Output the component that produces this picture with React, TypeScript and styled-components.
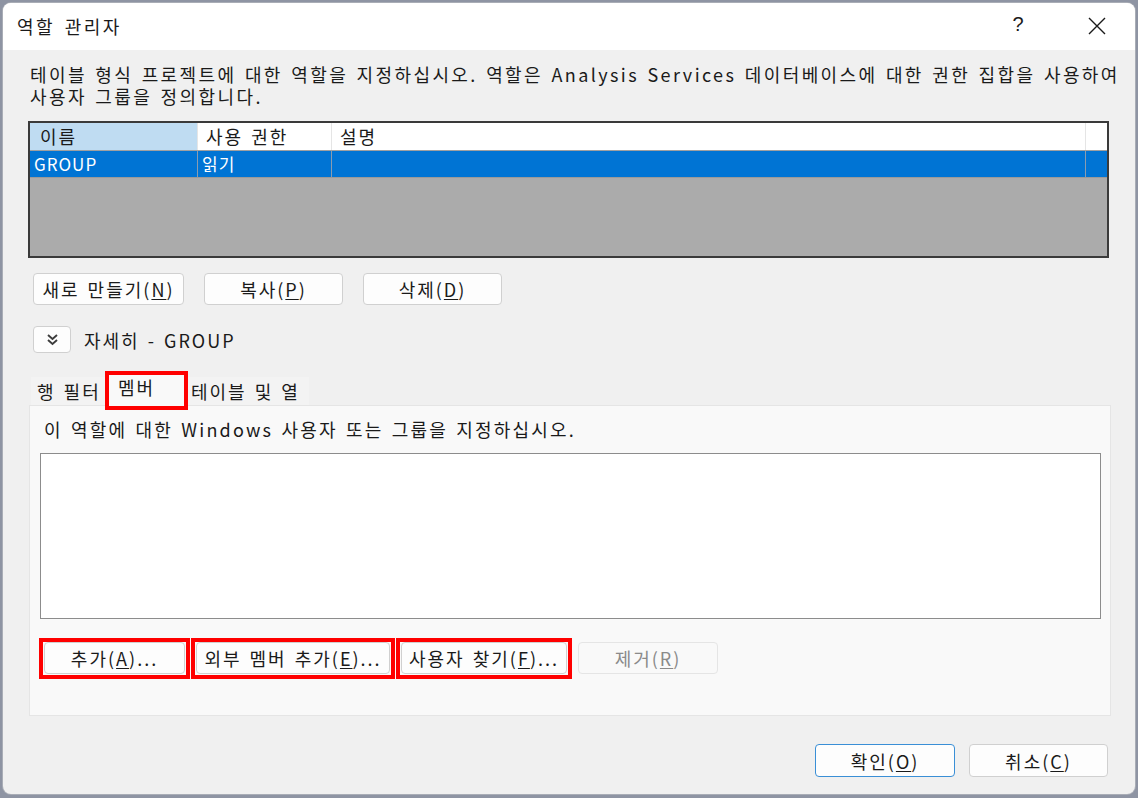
import { ReactElement } from 'react';
import styled, { createGlobalStyle, css } from 'styled-components';

const GlobalStyle = createGlobalStyle`
html, body {
    margin: 0;
    padding: 0;
    background-color: #8e94a3;
}
body {
    font-family: "Noto Sans CJK KR", "Noto Sans", sans-serif;
    color: #1a1a1a;
}
`;

interface IColumn {
    title: string;
    width: number;
}

const columns: IColumn[] = [
    { title: '이름', width: 168 },
    { title: '사용 권한', width: 134 },
    { title: '설명', width: 754 },
];

const roles = [{ name: 'GROUP', permission: '읽기', description: '' }];

const Label = (props: { text: string; keyChar: string; suffix?: string }): ReactElement => (
    <>
        {props.text}(<u>{props.keyChar}</u>){props.suffix}
    </>
);

const CloseIcon = () => (
    <svg width="18" height="18" viewBox="0 0 18 18">
        <path d="M1 1 L17 17 M17 1 L1 17" stroke="#1a1a1a" strokeWidth="1.4" fill="none" />
    </svg>
);

const ExpandIcon = () => (
    <svg width="13" height="13" viewBox="0 0 13 13">
        <path d="M2 2 L6.5 6 L11 2 M2 7 L6.5 11 L11 7" stroke="#3c3c3c" strokeWidth="1.9" fill="none" />
    </svg>
);

const RolesGrid = (): ReactElement => (
    <Grid>
        <GridHeader>
            {columns.map((col, i) => (
                <HeaderCell key={col.title} $w={col.width} $active={i === 0}>{col.title}</HeaderCell>
            ))}
            <HeaderFiller />
        </GridHeader>
        {roles.map(role => (
            <GridRow key={role.name}>
                <RowCell $w={columns[0].width}>{role.name}</RowCell>
                <RowCell $w={columns[1].width}>{role.permission}</RowCell>
                <RowCell $w={columns[2].width}>{role.description}</RowCell>
                <RowFiller />
            </GridRow>
        ))}
    </Grid>
);

export default function App(): ReactElement {
    return (
        <>
            <GlobalStyle />
            <Window>
                <TitleBar>
                    <Title>역할 관리자</Title>
                    <TitleButtons>
                        <HelpButton>?</HelpButton>
                        <CloseButton><CloseIcon /></CloseButton>
                    </TitleButtons>
                </TitleBar>
                <Body>
                    <Description>
                        <div>테이블 형식 프로젝트에 대한 역할을 지정하십시오. 역할은 Analysis Services 데이터베이스에 대한 권한 집합을 사용하여</div>
                        <div>사용자 그룹을 정의합니다.</div>
                    </Description>
                    <RolesGrid />
                    <ButtonRow>
                        <Button $w={151}><Label text="새로 만들기" keyChar="N" /></Button>
                        <Button $w={139}><Label text="복사" keyChar="P" /></Button>
                        <Button $w={139}><Label text="삭제" keyChar="D" /></Button>
                    </ButtonRow>
                    <DetailsRow>
                        <ExpandButton><ExpandIcon /></ExpandButton>
                        <span>자세히 - GROUP</span>
                    </DetailsRow>
                    <TabStrip>
                        <Tab $w={77}>행 필터</Tab>
                        <Tab $w={77} $selected $marked>멤버</Tab>
                        <Tab $w={124}>테이블 및 열</Tab>
                    </TabStrip>
                    <TabPanel>
                        <PanelText>이 역할에 대한 Windows 사용자 또는 그룹을 지정하십시오.</PanelText>
                        <MemberList />
                        <PanelButtons>
                            <Button $w={141} $marked><Label text="추가" keyChar="A" suffix="..." /></Button>
                            <Button $w={194} $marked><Label text="외부 멤버 추가" keyChar="E" suffix="..." /></Button>
                            <Button $w={166} $marked><Label text="사용자 찾기" keyChar="F" suffix="..." /></Button>
                            <Button $w={140} disabled><Label text="제거" keyChar="R" /></Button>
                        </PanelButtons>
                    </TabPanel>
                    <Footer>
                        <Button $w={140} $h={33} $primary><Label text="확인" keyChar="O" /></Button>
                        <Button $w={139} $h={33}><Label text="취소" keyChar="C" /></Button>
                    </Footer>
                </Body>
            </Window>
        </>
    );
}

const Window = styled.div`
margin: 3px 3px 4px 3px;
width: 1132px;
height: 791px;
box-sizing: border-box;
border-radius: 8px;
overflow: hidden;
background-color: #f0f0f0;
box-shadow: 0 0 0 1px #a9adb6;
display: flex;
flex-direction: column;
`;

const TitleBar = styled.div`
height: 47px;
flex-shrink: 0;
background-color: #ffffff;
display: flex;
align-items: center;
justify-content: space-between;
padding-left: 14px;
`;

const Title = styled.div`
font-size: 18px;
letter-spacing: 2.5px;
word-spacing: 3px;
color: #1a1a1a;
margin-top: -2px;
`;

const TitleButtons = styled.div`
display: flex;
align-items: center;
height: 100%;
`;

const HelpButton = styled.div`
width: 70px;
text-align: center;
font-size: 20px;
font-family: "Liberation Sans", sans-serif;
color: #1a1a1a;
margin-right: 9px;
margin-top: -4px;
`;

const CloseButton = styled.div`
width: 70px;
display: flex;
justify-content: center;
margin-right: 3px;
margin-top: -2px;
`;

const Body = styled.div`
flex: 1;
display: flex;
flex-direction: column;
padding: 13px 26px 0 25px;
font-size: 18px;
letter-spacing: 2px;
word-spacing: 2px;
`;

const Description = styled.div`
padding-left: 2px;
line-height: 22px;
letter-spacing: 2.4px;
white-space: nowrap;
`;

const Grid = styled.div`
margin-top: 14px;
height: 137px;
box-sizing: border-box;
border: 2px solid #3a3a3a;
background-color: #ababab;
display: flex;
flex-direction: column;
`;

const GridHeader = styled.div`
display: flex;
height: 27px;
background-color: #ffffff;
border-bottom: 1px solid #a0a0a0;
`;

const HeaderCell = styled.div<{ $w: number; $active?: boolean }>`
width: ${p => p.$w}px;
flex-shrink: 0;
box-sizing: border-box;
padding-left: ${p => (p.$active ? 10 : 8)}px;
border-right: 1px solid #e5e5e5;
background-color: ${p => (p.$active ? '#bfdcf2' : '#ffffff')};
line-height: 27px;
color: #1a1a1a;
`;

const HeaderFiller = styled.div`
flex: 1;
`;

const GridRow = styled.div`
display: flex;
height: 26px;
background-color: #0074d4;
border-bottom: 1px solid #9a9a9a;
`;

const RowCell = styled.div<{ $w: number }>`
width: ${p => p.$w}px;
flex-shrink: 0;
box-sizing: border-box;
padding-left: 4px;
border-right: 1px solid #8a9cb0;
color: #ffffff;
font-size: 17px;
letter-spacing: 1px;
line-height: 26px;
`;

const RowFiller = styled.div`
flex: 1;
`;

const ButtonRow = styled.div`
display: flex;
gap: 20px;
margin-top: 15px;
padding-left: 5px;
`;

const redFrame = css`
position: relative;

&::after {
    content: '';
    position: absolute;
    border: 4px solid #ff0000;
    pointer-events: none;
}
`;

const Button = styled.button<{ $w: number; $h?: number; $primary?: boolean; $marked?: boolean }>`
width: ${p => p.$w}px;
height: ${p => p.$h ?? 32}px;
box-sizing: border-box;
flex-shrink: 0;
padding: 0;
border-radius: 4px;
border: 1px solid ${p => (p.$primary ? '#3a8fd6' : '#d0d0d0')};
background-color: #fdfdfd;
font-family: "Noto Sans CJK KR", "Noto Sans", sans-serif;
font-size: 18px;
letter-spacing: inherit;
word-spacing: inherit;
color: #1a1a1a;
${p => p.$marked && css`
    ${redFrame}
    &::after {
        inset: -5px -6px -6px -6px;
    }
`}

&:disabled {
    color: #8a8a8a;
    border-color: #e5e5e5;
    background-color: #f9f9f9;
}

u {
    text-underline-offset: 2px;
}
`;

const DetailsRow = styled.div`
display: flex;
align-items: center;
gap: 13px;
margin-top: 21px;
padding-left: 5px;
`;

const ExpandButton = styled.div`
width: 38px;
height: 27px;
box-sizing: border-box;
border: 1px solid #d0d0d0;
border-radius: 4px;
background-color: #fdfdfd;
display: flex;
align-items: center;
justify-content: center;
`;

const TabStrip = styled.div`
display: flex;
align-items: flex-end;
margin-top: 24px;
padding-left: 3px;
height: 28px;
position: relative;
z-index: 1;
`;

const Tab = styled.div<{ $w: number; $selected?: boolean; $marked?: boolean }>`
width: ${p => p.$w}px;
height: ${p => (p.$selected ? 31 : 28)}px;
box-sizing: border-box;
padding-left: ${p => (p.$selected ? 10 : 6)}px;
margin-bottom: ${p => (p.$selected ? -1 : 0)}px;
background-color: ${p => (p.$selected ? '#f9f9f9' : '#f3f3f3')};
line-height: ${p => (p.$selected ? 24 : 28)}px;
color: #1a1a1a;
${p => p.$marked && css`
    ${redFrame}
    &::after {
        inset: -4px -3px -4px -3px;
    }
`}
`;

const TabPanel = styled.div`
height: 311px;
box-sizing: border-box;
margin-left: 1px;
margin-right: -2px;
border: 1px solid #e5e5e5;
background-color: #f9f9f9;
display: flex;
flex-direction: column;
padding: 12px 9px 0 10px;
`;

const PanelText = styled.div`
padding-left: 4px;
line-height: 22px;
letter-spacing: 2.2px;
`;

const MemberList = styled.div`
margin-top: 13px;
height: 166px;
box-sizing: border-box;
border: 1px solid #8c8c8c;
background-color: #ffffff;
`;

const PanelButtons = styled.div`
display: flex;
gap: 11px;
margin-top: 23px;
padding-left: 4px;
`;

const Footer = styled.div`
display: flex;
justify-content: flex-end;
gap: 14px;
margin-top: 28px;
margin-right: 1px;
`;
